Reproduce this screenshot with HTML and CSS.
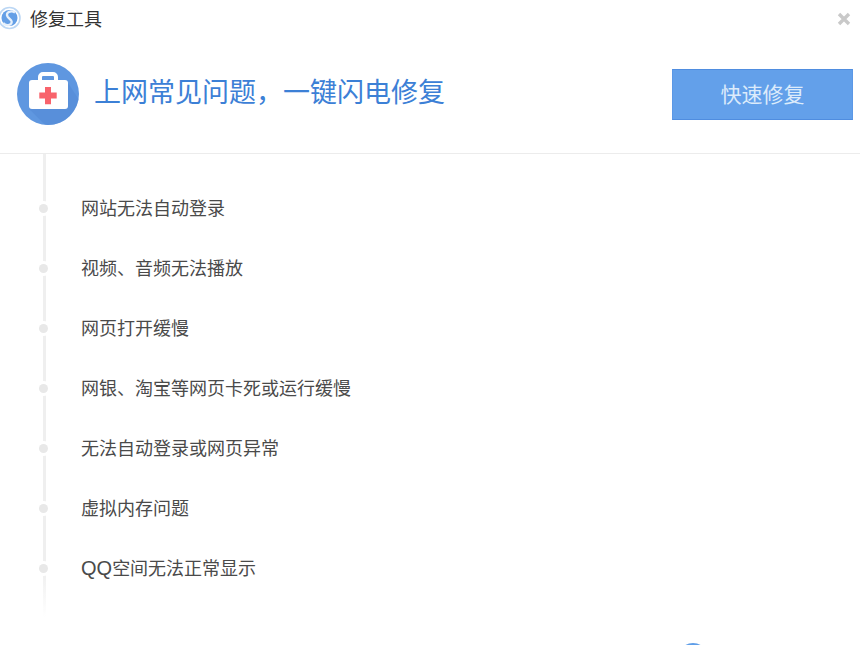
FILE: index.html
```html
<!DOCTYPE html>
<html lang="zh-CN">
<head>
<meta charset="utf-8">
<title>修复工具</title>
<link rel="stylesheet" href="styles.css">
</head>
<body>
<div class="app">
  <header class="titlebar">
    <div class="title-left">
      <svg class="logo" width="23" height="24" viewBox="0 0 23 24">
        <circle cx="10.500" cy="12" r="10.500" fill="#fff" stroke="#bcd7f4" stroke-width="1.600"/>
        <circle cx="10.500" cy="12" r="8" fill="#649fe6"/>
        <path d="M16 6.600C12 3.800 6 6.600 8.600 10.600 10.800 13.800 14.400 14.400 12 17.800 10 20 6.400 19.400 4.200 17" fill="none" stroke="#e6f0fb" stroke-width="2.400"/>
      </svg>
      <span class="title-text">修复工具</span>
    </div>
    <svg class="close" width="14" height="14" viewBox="0 0 14 14">
      <path d="M2 2l10 10M12 2L2 12" stroke="#c9c9c9" stroke-width="3.400" fill="none"/>
    </svg>
  </header>
  <section class="banner">
    <div class="banner-left">
      <svg class="medkit" width="62" height="62" viewBox="0 0 62 62">
        <circle cx="31" cy="31" r="31" fill="#5f97e0"/>
        <path d="M12 46L51 20 61.500 36A31 31 0 0 1 28 61.800z" fill="#5289d6" opacity=".55"/>
        <rect x="23" y="11" width="16" height="10" rx="3" fill="none" stroke="#fff" stroke-width="4"/>
        <rect x="12" y="17" width="39" height="29" rx="3" fill="#fff"/>
        <path d="M28 24h6v5.600h5.700v6H34v5.700h-6v-5.700h-5.700v-6H28z" fill="#f8636c"/>
      </svg>
      <h1 class="headline">上网常见问题，一键闪电修复</h1>
    </div>
    <button class="fix-btn" type="button">快速修复</button>
  </section>
  <ul class="issues">
    <li class="issue">网站无法自动登录</li>
    <li class="issue">视频、音频无法播放</li>
    <li class="issue">网页打开缓慢</li>
    <li class="issue">网银、淘宝等网页卡死或运行缓慢</li>
    <li class="issue">无法自动登录或网页异常</li>
    <li class="issue">虚拟内存问题</li>
    <li class="issue"><span class="latin">QQ</span>空间无法正常显示</li>
  </ul>
  <div class="peek"></div>
</div>
</body>
</html>
```
FILE: styles.css
```css
* { box-sizing: border-box; }
html, body {
  margin: 0;
  padding: 0;
  width: 860px;
  height: 645px;
  overflow: hidden;
  background: #fff;
}
body {
  font-family: "Liberation Sans", "Noto Sans CJK SC", sans-serif;
  color: #444;
}
.app {
  position: relative;
  width: 860px;
  height: 645px;
  overflow: hidden;
}
.titlebar {
  display: flex;
  justify-content: space-between;
  align-items: center;
  height: 38px;
  padding-right: 9px;
}
.title-left {
  display: flex;
  align-items: center;
  gap: 8px;
}
.logo {
  margin-left: -1px;
  margin-top: -3px;
}
.title-text {
  padding-top: 2px;
  font-size: 18px;
  line-height: 38px;
  color: #333;
}
.banner {
  display: flex;
  justify-content: space-between;
  align-items: center;
  height: 116px;
  padding: 0 7px 0 17px;
  border-bottom: 1px solid #ececec;
}
.banner-left {
  display: flex;
  align-items: center;
  gap: 15px;
  margin-top: -3px;
}
.medkit {
  display: block;
}
.headline {
  margin: -3px 0 0;
  font-size: 27px;
  font-weight: 400;
  line-height: 40px;
  color: #3c80d6;
}
.fix-btn {
  width: 181px;
  height: 51px;
  margin-top: -2px;
  padding: 0 0 4px;
  border: 1px solid #5b98e6;
  border-top-color: #4f8de0;
  border-bottom-color: #4f8de0;
  background: #63a0ea;
  color: #dcebfb;
  font: inherit;
  font-size: 21px;
}
.issues {
  position: relative;
  margin: 0;
  padding: 24px 0 0 81px;
  list-style: none;
}
.issues::before {
  content: "";
  position: absolute;
  left: 43px;
  top: 0;
  width: 3px;
  height: 463px;
  background: linear-gradient(#efefef 0, #efefef 90%, #fff 100%);
}
.issue {
  position: relative;
  height: 60px;
  font-size: 18px;
  line-height: 62px;
  color: #4a4a4a;
}
.latin {
  font-size: 20px;
  line-height: 1;
}
.issue::before {
  content: "";
  position: absolute;
  left: -42px;
  top: 26px;
  width: 9px;
  height: 9px;
  border-radius: 50%;
  background: #e8e8e8;
  box-shadow: 0 0 0 3px #fff;
}
.peek {
  position: absolute;
  left: 678px;
  top: 643px;
  width: 30px;
  height: 30px;
  border-radius: 50%;
  background: #5f9ee8;
}
```
